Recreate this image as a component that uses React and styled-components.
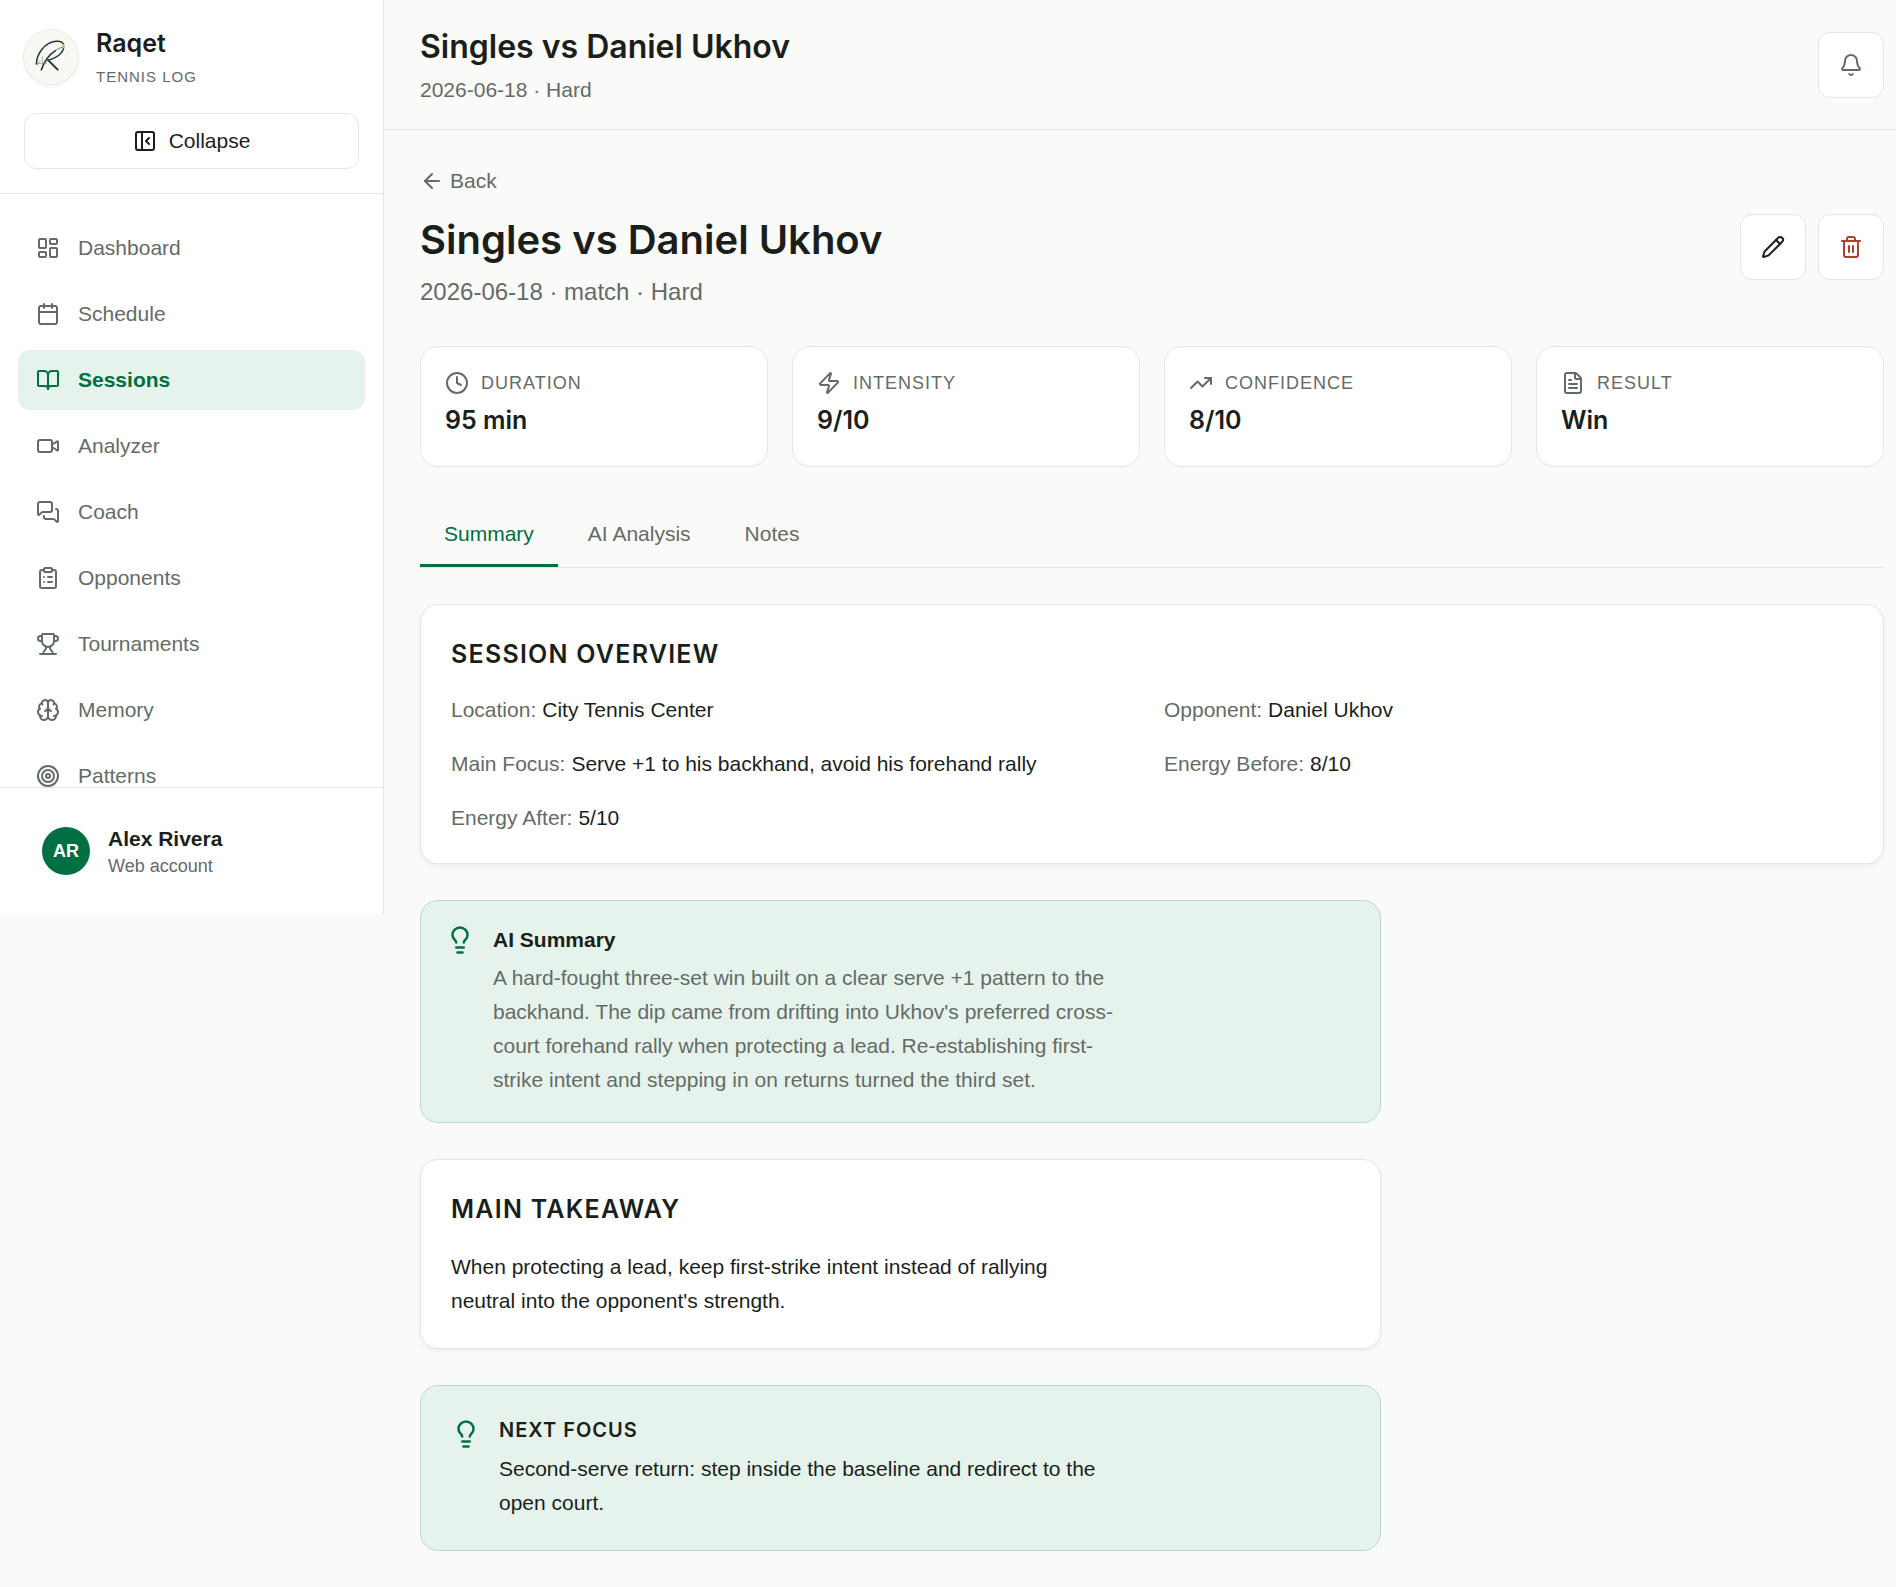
import React, { useState } from "react";
import styled, { createGlobalStyle, css } from "styled-components";
import {
  ArrowLeft,
  Bell,
  BookOpen,
  Brain,
  Calendar,
  ClipboardList,
  Clock,
  FileText,
  LayoutDashboard,
  Lightbulb,
  MessagesSquare,
  PanelLeftClose,
  Pencil,
  Target,
  Trash2,
  TrendingUp,
  Trophy,
  Video,
  Zap,
} from "lucide-react";

const color = {
  page: "#fafaf8",
  surface: "#ffffff",
  text: "#1a1f1c",
  muted: "#646b66",
  line: "#e5e6e4",
  green: "#006f42",
  mint: "#e6f3ec",
  mintLine: "#b9d8c9",
  red: "#a8432f",
};

const sans = `"Liberation Sans", Arial, sans-serif`;
const display = `Inter, "Liberation Sans", sans-serif`;

const GlobalStyle = createGlobalStyle`
  *, *::before, *::after { box-sizing: border-box; }
  body {
    margin: 0;
    background: ${color.page};
    color: ${color.text};
    font-family: ${sans};
    font-size: 21px;
    line-height: 30px;
  }
  h1, h2, h3, p, ul, dl, dd { margin: 0; padding: 0; }
  button { font: inherit; color: inherit; cursor: pointer; }
  svg { flex: none; }
`;

const Shell = styled.div`
  display: flex;
  align-items: flex-start;
  min-height: 100vh;
`;

/* Sidebar */

const Sidebar = styled.aside`
  position: sticky;
  top: 0;
  display: flex;
  flex-direction: column;
  flex: none;
  width: 384px;
  height: 914px;
  max-height: 100vh;
  background: ${color.surface};
  border-right: 1px solid ${color.line};
`;

const SidebarTop = styled.div`
  display: flex;
  flex-direction: column;
  gap: 24px;
  padding: 24px;
  border-bottom: 1px solid ${color.line};
`;

const Brand = styled.div`
  display: flex;
  align-items: center;
  gap: 18px;
`;

const BrandMark = styled.span`
  display: flex;
  width: 54px;
  height: 54px;
  overflow: hidden;
  border-radius: 50%;
  background: #faf8f4;
  box-shadow: 0 0 0 1px #ececea, 0 2px 4px rgba(0, 0, 0, 0.08);
`;

const BrandText = styled.div`
  display: flex;
  flex-direction: column;
  gap: 2px;
`;

const BrandName = styled.span`
  font: 600 25px/38px ${display};
`;

const BrandTag = styled.span`
  font-size: 15px;
  line-height: 25px;
  letter-spacing: 1px;
  color: ${color.muted};
`;

const CollapseButton = styled.button`
  display: flex;
  align-items: center;
  justify-content: center;
  gap: 12px;
  height: 56px;
  background: ${color.surface};
  border: 1px solid ${color.line};
  border-radius: 12px;
`;

const Nav = styled.nav`
  display: flex;
  flex: 1;
  flex-direction: column;
  gap: 6px;
  min-height: 0;
  padding: 24px 18px;
  overflow: hidden;
`;

const NavLink = styled.a`
  display: flex;
  flex: none;
  align-items: center;
  gap: 18px;
  height: 60px;
  padding: 0 18px;
  border-radius: 12px;
  color: ${color.muted};
  text-decoration: none;
  ${(p) =>
    p.$active &&
    css`
      background: ${color.mint};
      color: ${color.green};
      font-weight: 700;
    `}
`;

const Account = styled.div`
  display: flex;
  align-items: center;
  gap: 18px;
  height: 127px;
  padding: 0 42px;
  border-top: 1px solid ${color.line};
`;

const Avatar = styled.span`
  display: grid;
  place-items: center;
  width: 48px;
  height: 48px;
  border-radius: 50%;
  background: ${color.green};
  color: #ffffff;
  font-size: 18px;
  font-weight: 700;
`;

const AccountText = styled.div`
  display: flex;
  flex-direction: column;
`;

const AccountName = styled.span`
  font-weight: 700;
`;

const AccountKind = styled.span`
  font-size: 18px;
  line-height: 24px;
  color: ${color.muted};
`;

/* Page frame */

const Page = styled.div`
  flex: 1;
  min-width: 0;
`;

const TopBar = styled.header`
  display: flex;
  align-items: center;
  justify-content: space-between;
  padding: 24px 12px 24px 36px;
  border-bottom: 1px solid ${color.line};
`;

const TopBarText = styled.div`
  display: flex;
  flex-direction: column;
  gap: 4px;
`;

const TopBarTitle = styled.h2`
  font: 600 32px/46px ${display};
`;

const TopBarMeta = styled.p`
  line-height: 31px;
  color: ${color.muted};
`;

const IconButton = styled.button`
  display: grid;
  place-items: center;
  width: 66px;
  height: 66px;
  padding: 0;
  background: ${color.surface};
  border: 1px solid ${color.line};
  border-radius: 12px;
  color: ${(p) => p.$tone || color.text};
`;

const Content = styled.main`
  display: flex;
  flex-direction: column;
  gap: 36px;
  padding: 36px 12px 36px 36px;
`;

const Intro = styled.div`
  display: flex;
  flex-direction: column;
  gap: 18px;
`;

const BackLink = styled.a`
  display: inline-flex;
  align-items: center;
  align-self: flex-start;
  gap: 6px;
  color: ${color.muted};
  text-decoration: none;
`;

const IntroRow = styled.div`
  display: flex;
  align-items: flex-start;
  justify-content: space-between;
`;

const IntroText = styled.div`
  display: flex;
  flex-direction: column;
  gap: 8px;
`;

const PageTitle = styled.h1`
  font: 600 40px/52px ${display};
`;

const PageMeta = styled.p`
  font-size: 24px;
  line-height: 36px;
  color: ${color.muted};
`;

const Actions = styled.div`
  display: flex;
  gap: 12px;
`;

/* Stats */

const Stats = styled.dl`
  display: grid;
  grid-template-columns: repeat(4, 1fr);
  gap: 24px;
`;

const Stat = styled.div`
  display: flex;
  flex-direction: column;
  gap: 4px;
  padding: 24px;
  background: ${color.surface};
  border: 1px solid ${color.line};
  border-radius: 18px;
`;

const StatLabel = styled.dt`
  display: flex;
  align-items: center;
  gap: 12px;
  font-size: 18px;
  line-height: 24px;
  letter-spacing: 1px;
  text-transform: uppercase;
  color: ${color.muted};
`;

const StatValue = styled.dd`
  font: 600 25px/43px ${display};
`;

/* Tabs */

const Tabs = styled.div`
  display: flex;
  gap: 6px;
  border-bottom: 1px solid ${color.line};
`;

const Tab = styled.button`
  height: 64px;
  padding: 0 24px;
  background: none;
  border: 0;
  border-bottom: 3px solid ${(p) => (p.$active ? color.green : "transparent")};
  color: ${(p) => (p.$active ? color.green : color.muted)};
`;

/* Cards */

const Card = styled.section`
  display: flex;
  flex-direction: column;
  gap: 22px;
  max-width: ${(p) => (p.$narrow ? "961px" : "none")};
  padding: 30px;
  background: ${color.surface};
  border: 1px solid ${color.line};
  border-radius: 18px;
  box-shadow: 0 2px 4px rgba(0, 0, 0, 0.06);
`;

const CardTitle = styled.h2`
  font: 600 25px/38px ${display};
  letter-spacing: 0.05em;
  text-transform: uppercase;
`;

const Facts = styled.dl`
  display: grid;
  grid-template-columns: 1fr 1fr;
  gap: 24px;
`;

const Fact = styled.div`
  display: flex;
  gap: 6px;

  dt {
    color: ${color.muted};
  }
`;

const Callout = styled.section`
  display: flex;
  align-items: flex-start;
  gap: 18px;
  max-width: 961px;
  padding: ${(p) => (p.$roomy ? "30px" : "24px 24px 25px")};
  background: ${color.mint};
  border: 1px solid ${color.mintLine};
  border-radius: 18px;
`;

const CalloutIcon = styled.span`
  display: flex;
  padding-top: ${(p) => (p.$roomy ? "3px" : "0")};
  color: ${color.green};
`;

const CalloutBody = styled.div`
  display: flex;
  flex-direction: column;
  gap: ${(p) => (p.$roomy ? "8px" : "6px")};
`;

const CalloutTitle = styled.h3`
  font-size: 21px;
  line-height: 30px;
`;

const FocusTitle = styled.h3`
  font: 600 20px/28px ${display};
  letter-spacing: 0.05em;
  text-transform: uppercase;
`;

const Prose = styled.p`
  max-width: 630px;
  line-height: 34px;
  color: ${(p) => (p.$muted ? color.muted : color.text)};
`;

const navItems = [
  ["Dashboard", LayoutDashboard],
  ["Schedule", Calendar],
  ["Sessions", BookOpen],
  ["Analyzer", Video],
  ["Coach", MessagesSquare],
  ["Opponents", ClipboardList],
  ["Tournaments", Trophy],
  ["Memory", Brain],
  ["Patterns", Target],
];

const stats = [
  ["Duration", "95 min", Clock],
  ["Intensity", "9/10", Zap],
  ["Confidence", "8/10", TrendingUp],
  ["Result", "Win", FileText],
];

const facts = [
  ["Location:", "City Tennis Center"],
  ["Opponent:", "Daniel Ukhov"],
  ["Main Focus:", "Serve +1 to his backhand, avoid his forehand rally"],
  ["Energy Before:", "8/10"],
  ["Energy After:", "5/10"],
];

const tabs = ["Summary", "AI Analysis", "Notes"];

const Logo = () => (
  <svg width="54" height="54" viewBox="72 87 162 162" fill="none" strokeLinecap="round" aria-hidden="true">
    <g stroke="#1b3a31">
      <path d="M109 189C110 158 134 124 168 121C183 120 191 124 191 134" strokeWidth="4.5" />
      <path d="M191 138C190 158 170 170 144 178" strokeWidth="4.5" />
      <path d="M145 178L173 206" strokeWidth="6" />
      <path d="M124 206C132 184 146 162 166 149" strokeWidth="5" />
      <path d="M166 149C174 143 181 140 187 139" strokeWidth="2" />
    </g>
    <path d="M112 187H140M127 166V192M112 192L120 180" stroke="#7d8f88" strokeWidth="2" />
    <path d="M190 132V139" stroke="#c5cf2e" strokeWidth="6" />
  </svg>
);

export default function App() {
  const [tab, setTab] = useState("Summary");

  return (
    <>
      <GlobalStyle />
      <Shell>
        <Sidebar>
          <SidebarTop>
            <Brand>
              <BrandMark>
                <Logo />
              </BrandMark>
              <BrandText>
                <BrandName>Raqet</BrandName>
                <BrandTag>TENNIS LOG</BrandTag>
              </BrandText>
            </Brand>
            <CollapseButton type="button">
              <PanelLeftClose size={24} strokeWidth={2} />
              Collapse
            </CollapseButton>
          </SidebarTop>
          <Nav aria-label="Main">
            {navItems.map(([label, Icon]) => (
              <NavLink
                key={label}
                href={`#${label.toLowerCase()}`}
                $active={label === "Sessions"}
                aria-current={label === "Sessions" ? "page" : undefined}
              >
                <Icon size={24} strokeWidth={2} />
                {label}
              </NavLink>
            ))}
          </Nav>
          <Account>
            <Avatar>AR</Avatar>
            <AccountText>
              <AccountName>Alex Rivera</AccountName>
              <AccountKind>Web account</AccountKind>
            </AccountText>
          </Account>
        </Sidebar>

        <Page>
          <TopBar>
            <TopBarText>
              <TopBarTitle>Singles vs Daniel Ukhov</TopBarTitle>
              <TopBarMeta>2026-06-18 · Hard</TopBarMeta>
            </TopBarText>
            <IconButton type="button" aria-label="Notifications" $tone={color.muted}>
              <Bell size={24} strokeWidth={2} />
            </IconButton>
          </TopBar>

          <Content>
            <Intro>
              <BackLink href="#sessions">
                <ArrowLeft size={24} strokeWidth={2} />
                Back
              </BackLink>
              <IntroRow>
                <IntroText>
                  <PageTitle>Singles vs Daniel Ukhov</PageTitle>
                  <PageMeta>2026-06-18 · match · Hard</PageMeta>
                </IntroText>
                <Actions>
                  <IconButton type="button" aria-label="Edit session">
                    <Pencil size={24} strokeWidth={2} />
                  </IconButton>
                  <IconButton type="button" aria-label="Delete session" $tone={color.red}>
                    <Trash2 size={24} strokeWidth={2} />
                  </IconButton>
                </Actions>
              </IntroRow>
            </Intro>

            <Stats>
              {stats.map(([label, value, Icon]) => (
                <Stat key={label}>
                  <StatLabel>
                    <Icon size={24} strokeWidth={2} />
                    {label}
                  </StatLabel>
                  <StatValue>{value}</StatValue>
                </Stat>
              ))}
            </Stats>

            <Tabs role="tablist">
              {tabs.map((name) => (
                <Tab
                  key={name}
                  type="button"
                  role="tab"
                  aria-selected={tab === name}
                  $active={tab === name}
                  onClick={() => setTab(name)}
                >
                  {name}
                </Tab>
              ))}
            </Tabs>

            <Card>
              <CardTitle>Session Overview</CardTitle>
              <Facts>
                {facts.map(([term, value]) => (
                  <Fact key={term}>
                    <dt>{term}</dt>
                    <dd>{value}</dd>
                  </Fact>
                ))}
              </Facts>
            </Card>

            <Callout>
              <CalloutIcon>
                <Lightbulb size={30} strokeWidth={2} />
              </CalloutIcon>
              <CalloutBody>
                <CalloutTitle>AI Summary</CalloutTitle>
                <Prose $muted>
                  A hard-fought three-set win built on a clear serve +1 pattern to the backhand. The dip
                  came from drifting into Ukhov's preferred cross-court forehand rally when protecting a
                  lead. Re-establishing first-strike intent and stepping in on returns turned the third
                  set.
                </Prose>
              </CalloutBody>
            </Callout>

            <Card $narrow>
              <CardTitle>Main Takeaway</CardTitle>
              <Prose>
                When protecting a lead, keep first-strike intent instead of rallying neutral into the
                opponent's strength.
              </Prose>
            </Card>

            <Callout $roomy>
              <CalloutIcon $roomy>
                <Lightbulb size={30} strokeWidth={2} />
              </CalloutIcon>
              <CalloutBody $roomy>
                <FocusTitle>Next Focus</FocusTitle>
                <Prose>
                  Second-serve return: step inside the baseline and redirect to the open court.
                </Prose>
              </CalloutBody>
            </Callout>
          </Content>
        </Page>
      </Shell>
    </>
  );
}
